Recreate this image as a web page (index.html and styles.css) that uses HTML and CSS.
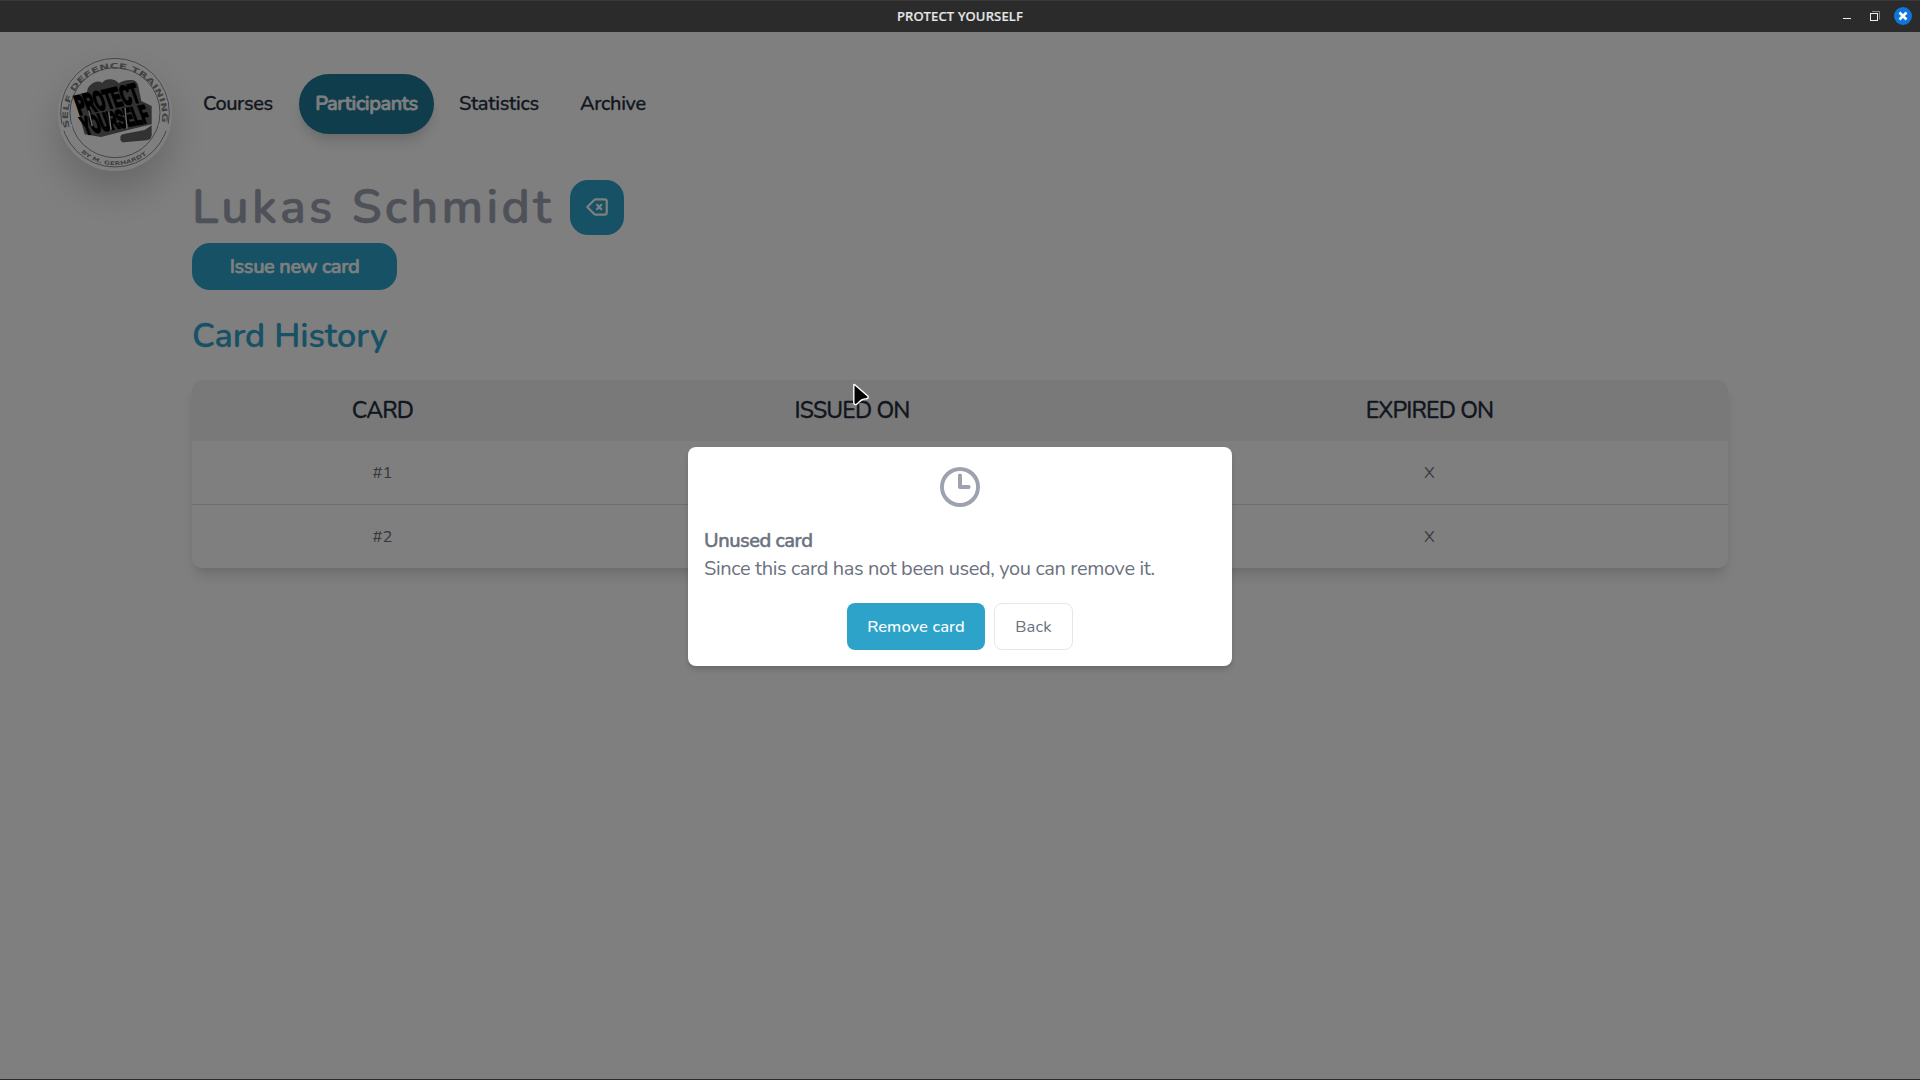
FILE: index.html
```
<!DOCTYPE html>
<html lang="en">
<head>
<meta charset="utf-8">
<title>Protect Yourself</title>
<link rel="stylesheet" href="styles.css">
</head>
<body>
<div class="window">
  <header class="titlebar">
    <span class="titlebar-text">PROTECT YOURSELF</span>
    <svg class="window-controls" width="80" height="32" viewBox="0 0 80 32">
      <path d="M3 18.5h8" stroke="#eee" fill="none"/>
      <path d="M32 11.5h7.5v8" stroke="#858585" fill="none"/>
      <rect x="30.5" y="13.5" width="7" height="7" stroke="#eee" fill="none"/>
      <circle cx="63" cy="16" r="9" fill="#0d75dc"/>
      <path d="M59.5 12.5l7 7M66.5 12.5l-7 7" stroke="#fff" stroke-width="2.6" fill="none"/>
    </svg>
  </header>
  <div class="app">
    <div class="topbar">
      <svg class="logo" viewBox="85 83 342 342">
        <defs>
          <path id="ring-top" d="M120 295A141 141 0 1 1 393 293"/>
          <path id="ring-bottom" d="M154 369A154 154 0 0 0 358 369"/>
        </defs>
        <circle cx="256" cy="254" r="170" fill="#fff"/>
        <g fill="none" stroke="#8c8c8c" stroke-width="3">
          <circle cx="256" cy="250" r="163"/>
          <circle cx="256" cy="250" r="135"/>
        </g>
        <g fill="#858585" font-family="'DejaVu Sans', sans-serif" font-weight="700">
          <path d="M96 284h32v20h-32zM386 284h32v20h-32z" fill="#fff"/>
          <text font-size="23"><textPath href="#ring-top" textLength="500" lengthAdjust="spacingAndGlyphs">SELF DEFENCE TRAINING</textPath></text>
          <text font-size="16"><textPath href="#ring-bottom" textLength="214" lengthAdjust="spacingAndGlyphs">BY M. GERHARDT</textPath></text>
        </g>
        <path fill="#646464" d="M135 210Q134 197 150 194L172 188Q172 172 190 161Q203 152 218 160Q226 149 244 150Q260 152 267 162Q280 153 300 152Q320 150 325 166L335 215L366 230V285L310 298L214 323L165 315Z"/>
        <path d="M272 325Q272 316 282 314L345 302L366 288V316Q366 331 350 333L284 339Q271 339 272 325Z" fill="#646464"/>
        <g fill="#000" stroke="#000" stroke-width="7" font-family="'Liberation Sans', sans-serif" font-weight="700">
          <text font-size="82" textLength="190" lengthAdjust="spacingAndGlyphs" transform="translate(149 256) rotate(-12) skewX(8)">PROTECT</text>
          <text font-size="76" textLength="200" lengthAdjust="spacingAndGlyphs" transform="translate(167 316) rotate(-11) skewX(10)">YOURSELF</text>
        </g>
        <path d="M177 244l11 46M237 246l7 54M286 236l6 62" stroke="#ddd" stroke-width="4" fill="none"/>
      </svg>
      <nav class="nav">
        <a class="nav-item courses">Courses</a>
        <a class="nav-item active">Participants</a>
        <a class="nav-item statistics">Statistics</a>
        <a class="nav-item archive">Archive</a>
      </nav>
    </div>
    <main class="content">
      <div class="person">
        <h1 class="person-name">Lukas Schmidt</h1>
        <button class="delete-button" aria-label="Delete">
          <svg width="26" height="26" viewBox="0 0 24 24" fill="none" stroke="#fff" stroke-width="2" stroke-linecap="round" stroke-linejoin="round"><path d="M12 14l2-2m0 0l2-2m-2 2l-2-2m2 2l2 2M3 12l6.414 6.414a2 2 0 001.414.586H19a2 2 0 002-2V7a2 2 0 00-2-2h-8.172a2 2 0 00-1.414.586L3 12z"/></svg>
        </button>
      </div>
      <button class="issue-button">Issue new card</button>
      <h2 class="section-title">Card History</h2>
      <table class="history">
        <thead><tr><th class="col-card">CARD</th><th class="col-issued">ISSUED ON</th><th class="col-expired">EXPIRED ON</th></tr></thead>
        <tbody>
          <tr><td>#1</td><td></td><td>X</td></tr>
          <tr><td>#2</td><td></td><td>X</td></tr>
        </tbody>
      </table>
    </main>
    <div class="overlay">
      <section class="modal">
        <svg class="clock" width="48" height="48" viewBox="0 0 20 20" fill="#9ca3af"><path fill-rule="evenodd" clip-rule="evenodd" d="M10 18.333a8.333 8.333 0 100-16.666 8.333 8.333 0 000 16.666zM10 16.7a6.7 6.7 0 110-13.4 6.7 6.7 0 010 13.4zM10.83 5.2a.83.83 0 00-1.66 0v4.8c0 .46.37.83.83.83h3.6a.83.83 0 000-1.66h-2.77z"/></svg>
        <h3 class="modal-title">Unused card</h3>
        <p class="modal-text">Since this card has not been used, you can remove it.</p>
        <div class="modal-actions">
          <button class="remove-button">Remove card</button>
          <button class="back-button">Back</button>
        </div>
      </section>
    </div>
  </div>
  <svg class="cursor" width="24" height="28" viewBox="0 0 24 28"><path d="M3.5 2.5L17 14.2Q18 16.6 15 16.8Q10.5 17 6.5 21.6Q3.5 24 2.8 21V3.5Q2.9 2 3.5 2.5Z" fill="#000" stroke="#fff" stroke-width="1.4"/></svg>
</div>
</body>
</html>
```
FILE: styles.css
```
* { box-sizing: border-box; }
body { margin: 0; font-family: Nunito, Lato, sans-serif; color: #252f3f; background: #fff; }
h1, h2, h3, p { margin: 0; }
button { font-family: inherit; border: 0; padding: 0; color: #fff; }
.window { position: relative; width: 1920px; height: 1080px; display: flex; flex-direction: column; overflow: hidden; border-bottom: 1px solid #2b2b2b; }

.titlebar { display: flex; flex: none; justify-content: flex-end; height: 32px; background: #2b2b2b; border-top: 1px solid #393939; }
.titlebar-text { flex: 1; padding-left: 80px; text-align: center; font: 500 13px/31px "Noto Sans", sans-serif; letter-spacing: .2px; color: #e8e8e8; -webkit-text-stroke: .2px; }
.window-controls { margin-top: -1px; }

.app { position: relative; flex: 1; background: #fff; }
.topbar { display: flex; height: 140px; padding-left: 58px; }
.logo { flex: none; width: 114px; height: 114px; margin-top: 25px; border-radius: 50%; box-shadow: 0 20px 40px rgba(0, 0, 0, .2); overflow: visible; }
.nav { display: flex; align-items: center; height: 60px; margin: 42px 0 0 15px; }
.nav-item { height: 60px; padding: 0 16px; font-size: 20px; line-height: 60px; font-weight: 500; white-space: nowrap; -webkit-text-stroke: .3px; }
.courses { width: 112px; letter-spacing: -.4px; }
.active { width: 135px; border-radius: 30px; background: #1e7a98; color: #fff; text-align: center; letter-spacing: -.4px; -webkit-text-stroke: .8px; box-shadow: 0 10px 15px -3px rgba(0, 0, 0, .14), 0 4px 6px -2px rgba(0, 0, 0, .06); }
.statistics { width: 121px; margin-left: 9px; letter-spacing: -.3px; }
.archive { letter-spacing: -.35px; }

.content { padding: 8px 192px 0; }
.person { display: flex; align-items: center; height: 55px; }
.person-name { width: 378px; font-size: 48px; line-height: 55px; font-weight: 600; letter-spacing: 3.35px; color: #9ca3af; white-space: nowrap; -webkit-text-stroke: .6px; }
.delete-button { display: flex; align-items: center; justify-content: center; width: 54px; height: 55px; padding-bottom: 1px; border-radius: 18px; background: #2ea3ca; }
.issue-button { display: block; width: 205px; height: 47px; margin-top: 8px; border-radius: 18px; background: #2ea3ca; font-size: 20px; font-weight: 500; letter-spacing: -.35px; -webkit-text-stroke: .7px; }
.section-title { margin-top: 21px; font-size: 34px; line-height: 50px; font-weight: 600; letter-spacing: 0; color: #2ea3ca; -webkit-text-stroke: .3px; }
.history { width: 1536px; margin-top: 19px; border-spacing: 0; table-layout: fixed; border-radius: 10px; overflow: hidden; background: #fff; box-shadow: 0 10px 15px -3px rgba(0, 0, 0, .13), 0 4px 6px -2px rgba(0, 0, 0, .06); }
.history th { height: 61px; padding: 0 0 1px; background: #f3f3f4; font-size: 23px; font-weight: 500; letter-spacing: -.85px; -webkit-text-stroke: .3px; }
.history td { height: 63px; padding: 0; text-align: center; font-size: 16.5px; letter-spacing: .2px; color: #6b7280; }
.history tbody tr + tr td { height: 64px; border-top: 1px solid #dedfe2; }
.col-card { width: 381px; }
.col-issued { width: 558px; }
.col-expired { width: 597px; }

.overlay { position: absolute; inset: 0; display: flex; align-items: flex-start; justify-content: center; padding-top: 415px; background: rgba(0, 0, 0, .5); }
.modal { display: flex; flex-direction: column; width: 544px; height: 219px; padding: 16px; border-radius: 8px; background: #fff; box-shadow: 0 4px 6px -1px rgba(0, 0, 0, .2); color: #6b7280; }
.clock { align-self: center; }
.modal-title { margin-top: 16px; font-size: 20px; line-height: 28px; font-weight: 500; letter-spacing: -.45px; -webkit-text-stroke: .5px; }
.modal-text { font-size: 20px; line-height: 28px; letter-spacing: -.37px; white-space: nowrap; }
.modal-actions { display: flex; justify-content: center; gap: 9px; margin-top: 20px; }
.remove-button, .back-button { height: 47px; border-radius: 8px; font-size: 16.5px; }
.remove-button { width: 138px; background: #2ea3ca; font-weight: 500; letter-spacing: .1px; }
.back-button { width: 79px; border: 1px solid #e5e7eb; background: #fff; color: #6b7280; letter-spacing: .2px; }

.cursor { position: absolute; left: 851px; top: 382px; }
```
